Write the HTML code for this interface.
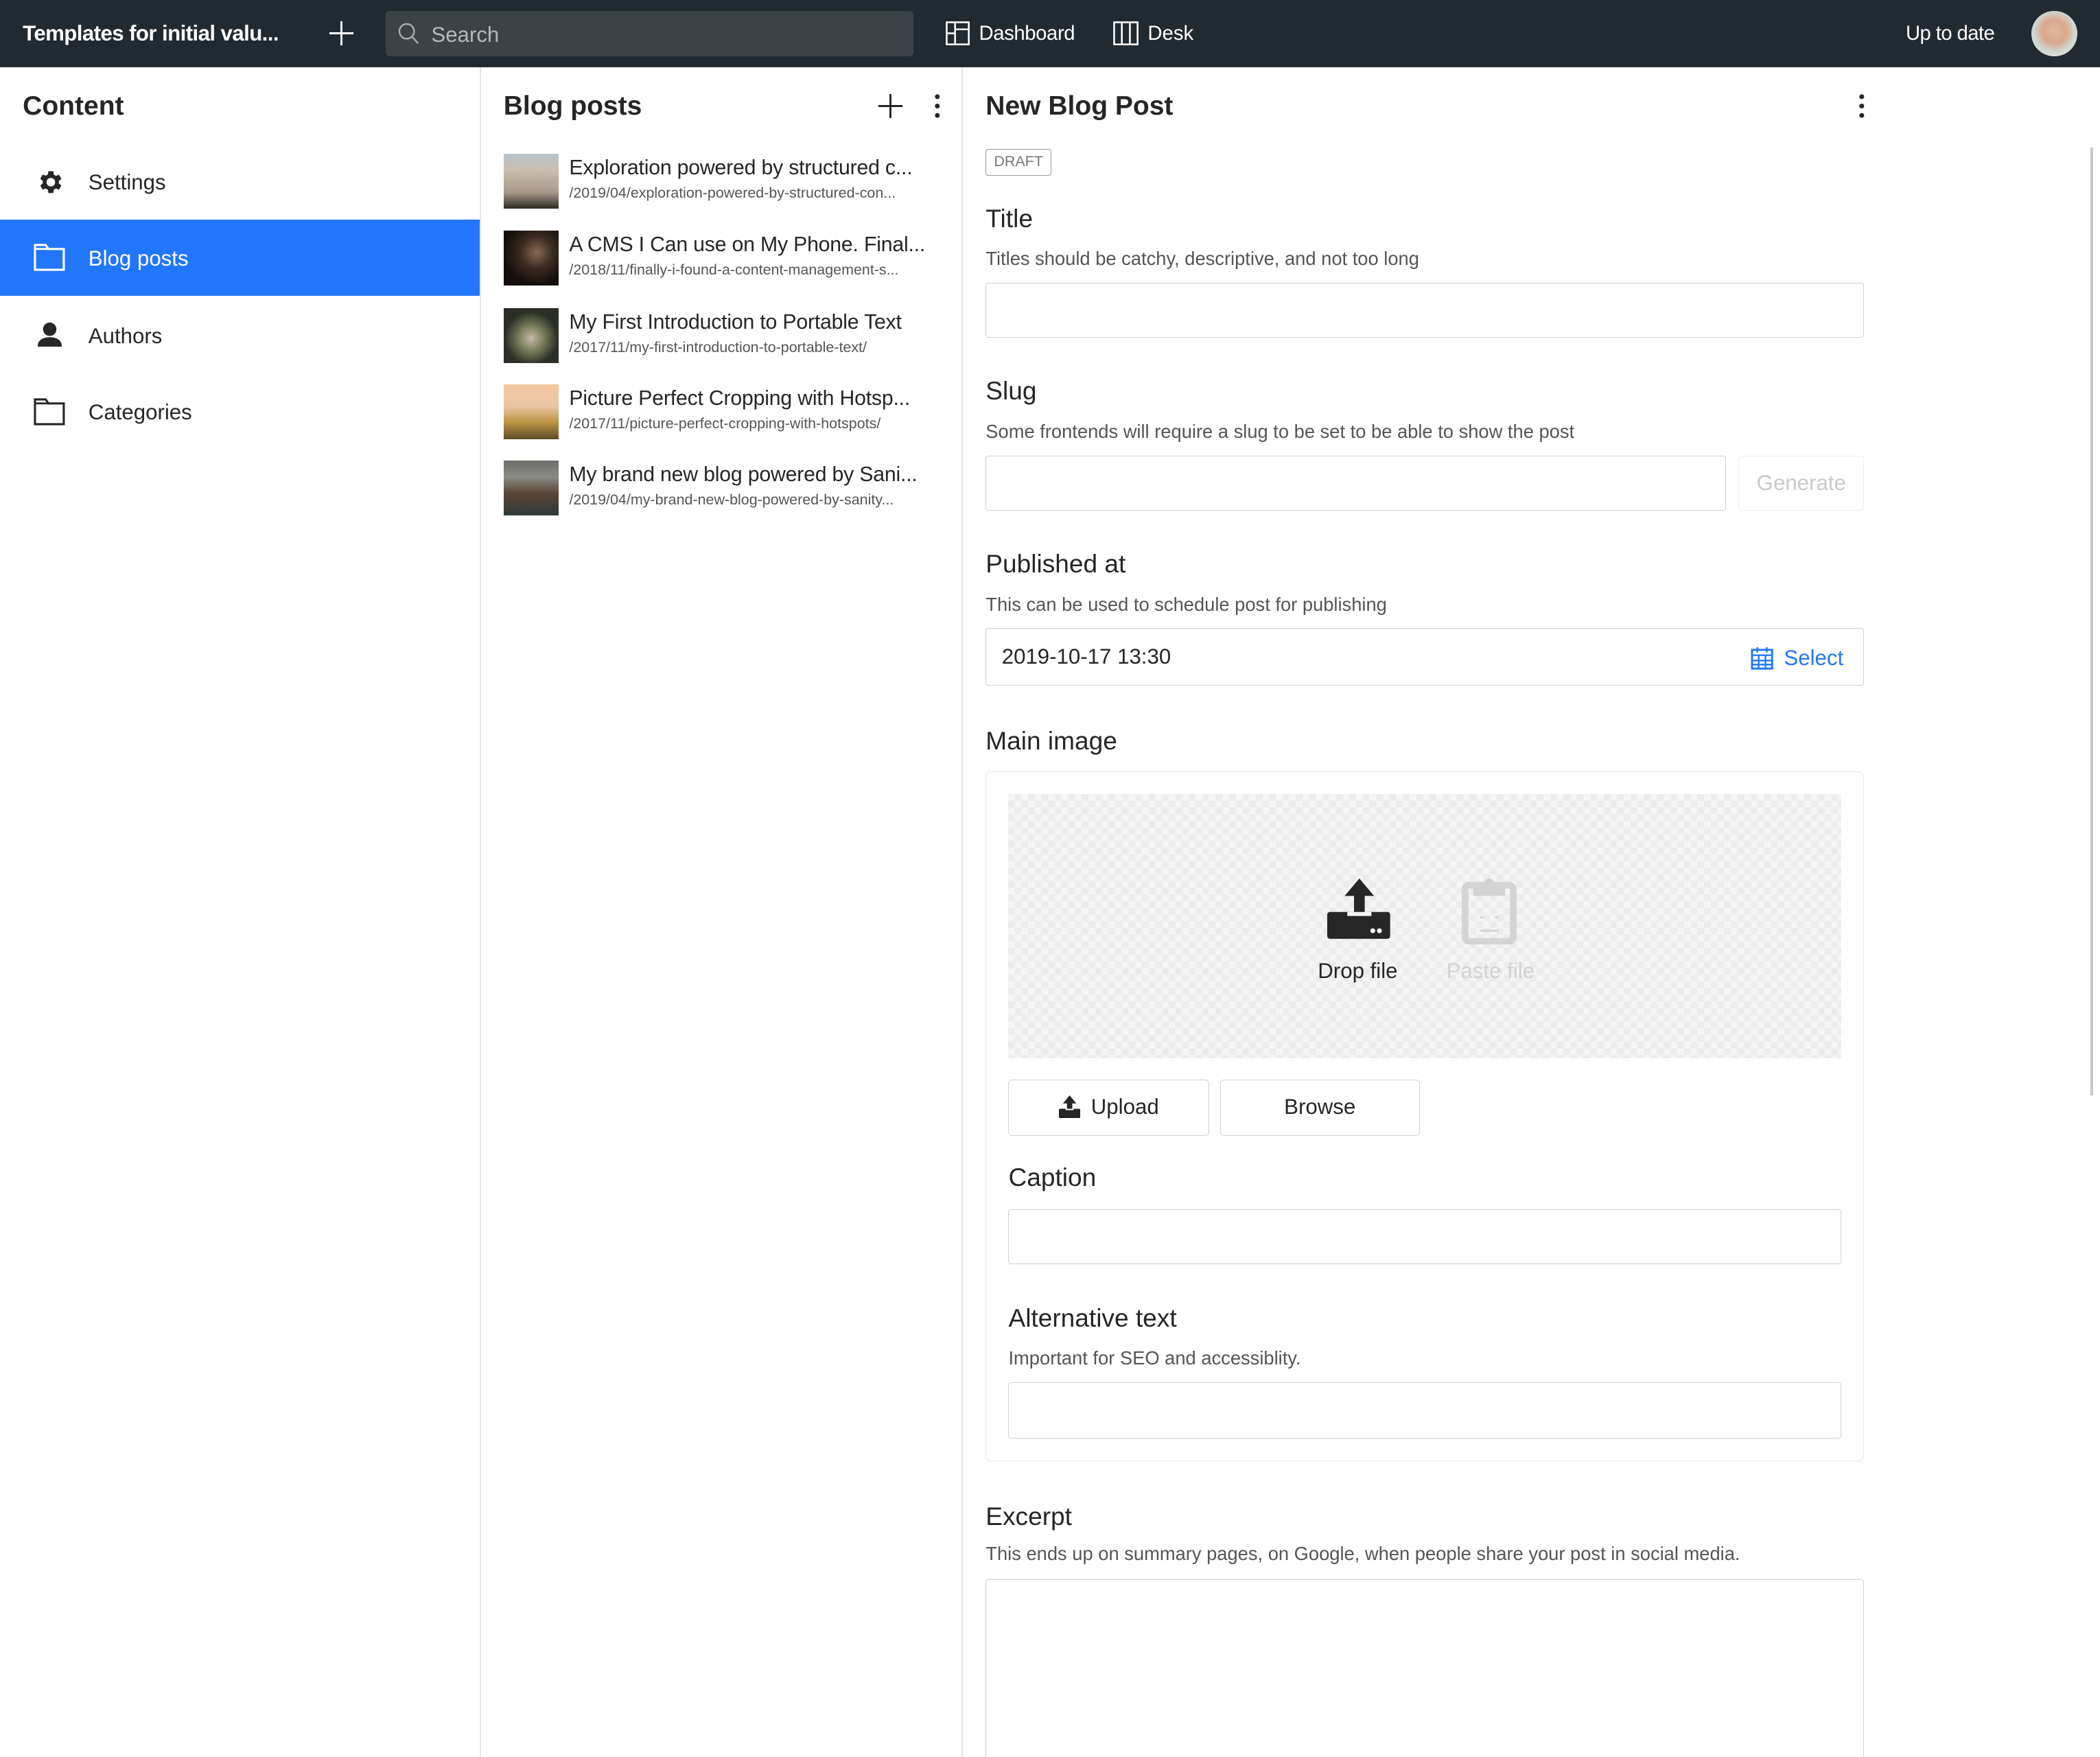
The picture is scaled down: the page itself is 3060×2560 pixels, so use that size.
<!DOCTYPE html>
<html><head><meta charset="utf-8"><style>
html,body{margin:0;padding:0;background:#fff;}
body{width:1568px;height:1312px;zoom:1.9515;overflow:hidden;position:relative;font-family:"Liberation Sans",sans-serif;color:#262626;}
.a{position:absolute;}
.top{left:0;top:0;width:1568px;height:50px;background:#222a31;color:#fff;}
.top .t{font-size:16px;}
.inp{border:1px solid #cfd1d4;border-radius:2px;background:#fff;box-sizing:border-box;}
.lbl{font-size:19px;color:#262626;}
.desc{font-size:14px;color:#555;}
.item .ti{font-size:15.5px;color:#262626;white-space:nowrap;letter-spacing:-0.1px;}
.item .u{font-size:11px;color:#555;white-space:nowrap;}
.th{width:41px;height:41px;}
.nav{font-size:16px;}
.btn{border:1px solid #cfd1d4;border-radius:3px;background:#fff;box-sizing:border-box;font-size:16px;text-align:center;line-height:40px;}
.chk{background-color:#f5f5f5;background-image:linear-gradient(45deg,#ececec 25%,transparent 25%,transparent 75%,#ececec 75%),linear-gradient(45deg,#ececec 25%,transparent 25%,transparent 75%,#ececec 75%);background-size:10px 10px;background-position:0 0,5px 5px;}
</style></head><body>
<div class="a top">
  <div class="a t" style="left:17px;top:16px;font-weight:bold;font-size:16px;letter-spacing:-0.3px;">Templates for initial valu...</div>
  <svg class="a" style="left:245px;top:15px" width="20" height="20"><path d="M10 1v18M1 10h18" stroke="#fff" stroke-width="1.5"/></svg>
  <div class="a" style="left:288px;top:8px;width:394px;height:34px;background:#3c4347;border-radius:3px;"></div>
  <svg class="a" style="left:297px;top:17px" width="16" height="17"><circle cx="6.5" cy="6.5" r="5.5" stroke="#aaa" stroke-width="1.3" fill="none"/><path d="M10.5 10.5l4.5 5" stroke="#aaa" stroke-width="1.3"/></svg>
  <div class="a t" style="left:322px;top:17px;color:#b5b8ba;">Search</div>
  <svg class="a" style="left:706px;top:16px" width="18" height="18"><rect x="0.75" y="0.75" width="16.5" height="16.5" fill="none" stroke="#fff" stroke-width="1.3"/><path d="M7 1v16M1 9h6M7 6h10" stroke="#fff" stroke-width="1.3"/></svg>
  <div class="a t" style="left:731px;top:17px;font-size:15px;letter-spacing:-0.2px;">Dashboard</div>
  <svg class="a" style="left:831px;top:16px" width="19" height="18"><rect x="0.75" y="0.75" width="17.5" height="16.5" fill="none" stroke="#fff" stroke-width="1.3"/><path d="M6.5 1v16M12.5 1v16" stroke="#fff" stroke-width="1.3"/></svg>
  <div class="a t" style="left:857px;top:17px;font-size:15px;">Desk</div>
  <div class="a t" style="left:1423px;top:17px;font-size:15px;letter-spacing:-0.3px;">Up to date</div>
  <div class="a" style="left:1517px;top:8px;width:34px;height:34px;border-radius:50%;background:radial-gradient(circle at 50% 45%,#e3b9a0 0,#d9a88c 35%,#cfd6cf 60%,#eaeeea 100%);"></div>
</div>
<div class="a" style="left:358px;top:50px;width:1px;height:1262px;background:#e4e5e7"></div>
<div class="a" style="left:17px;top:68px;font-size:20px;font-weight:bold;">Content</div>
<svg class="a" style="left:26px;top:125px" width="22" height="22" viewBox="0 0 24 24"><path fill="#262626" d="M19.4 13a7.6 7.6 0 0 0 0-2l2.1-1.6-2-3.5-2.5 1a7.4 7.4 0 0 0-1.7-1L14.9 3h-4l-.4 2.7a7.4 7.4 0 0 0-1.7 1l-2.5-1-2 3.5L6.4 11a7.6 7.6 0 0 0 0 2l-2.1 1.6 2 3.5 2.5-1a7.4 7.4 0 0 0 1.7 1l.4 2.7h4l.4-2.7a7.4 7.4 0 0 0 1.7-1l2.5 1 2-3.5zM12.9 15.5a3.5 3.5 0 1 1 0-7 3.5 3.5 0 0 1 0 7z"/></svg>
<div class="a nav" style="left:66px;top:127px;">Settings</div>
<div class="a" style="left:0;top:164px;width:358px;height:57px;background:#2276fc"></div>
<svg class="a" style="left:25px;top:181px" width="24" height="22"><path d="M1 2h8l2 3h11.5v15.5H1z" fill="none" stroke="#fff" stroke-width="1.6"/><path d="M1 5h10" stroke="#fff" stroke-width="1.4"/></svg>
<div class="a nav" style="left:66px;top:184px;color:#fff;">Blog posts</div>
<svg class="a" style="left:26px;top:240px" width="22" height="22"><circle cx="11" cy="6" r="5" fill="#262626"/><path d="M2 19c0-5 4-7 9-7s9 2 9 7z" fill="#262626"/></svg>
<div class="a nav" style="left:66px;top:242px;">Authors</div>
<svg class="a" style="left:25px;top:296px" width="24" height="22"><path d="M1 2h8l2 3h11.5v15.5H1z" fill="none" stroke="#262626" stroke-width="1.6"/><path d="M1 5h10" stroke="#262626" stroke-width="1.4"/></svg>
<div class="a nav" style="left:66px;top:299px;">Categories</div>
<div class="a" style="left:718px;top:50px;width:1px;height:1262px;background:#e4e5e7"></div>
<div class="a" style="left:376px;top:68px;font-size:20px;font-weight:bold;">Blog posts</div>
<svg class="a" style="left:655px;top:69px" width="20" height="20"><path d="M10 1v18M1 10h18" stroke="#262626" stroke-width="1.5"/></svg>
<svg class="a" style="left:696px;top:69px" width="8" height="20"><circle cx="4" cy="3" r="1.8" fill="#262626"/><circle cx="4" cy="10" r="1.8" fill="#262626"/><circle cx="4" cy="17" r="1.8" fill="#262626"/></svg>
<div class="a item" style="left:376px;top:115px">
 <div class="a th" style="background:linear-gradient(#b9c4cc 0,#c9beae 30%,#a89a88 70%,#2e2a26 100%)"></div>
 <div class="a ti" style="left:49px;top:2px">Exploration powered by structured c...</div>
 <div class="a u" style="left:49px;top:23px">/2019/04/exploration-powered-by-structured-con...</div>
</div>
<div class="a item" style="left:376px;top:172px">
 <div class="a th" style="background:radial-gradient(circle at 60% 40%,#8a6a55 0,#3a2a22 35%,#140f0c 70%)"></div>
 <div class="a ti" style="left:49px;top:2px">A CMS I Can use on My Phone. Final...</div>
 <div class="a u" style="left:49px;top:23px">/2018/11/finally-i-found-a-content-management-s...</div>
</div>
<div class="a item" style="left:376px;top:230px">
 <div class="a th" style="background:radial-gradient(circle at 50% 55%,#c9b9a8 0,#7a7f5a 30%,#2b2f28 65%)"></div>
 <div class="a ti" style="left:49px;top:2px">My First Introduction to Portable Text</div>
 <div class="a u" style="left:49px;top:23px">/2017/11/my-first-introduction-to-portable-text/</div>
</div>
<div class="a item" style="left:376px;top:287px">
 <div class="a th" style="background:linear-gradient(#f2c7a0 0,#e8c5a4 40%,#b8923f 70%,#5e4a2a 100%)"></div>
 <div class="a ti" style="left:49px;top:2px">Picture Perfect Cropping with Hotsp...</div>
 <div class="a u" style="left:49px;top:23px">/2017/11/picture-perfect-cropping-with-hotspots/</div>
</div>
<div class="a item" style="left:376px;top:344px">
 <div class="a th" style="background:linear-gradient(#6d6d6a 0,#8a8a85 30%,#5a4535 60%,#2e3a3a 100%)"></div>
 <div class="a ti" style="left:49px;top:2px">My brand new blog powered by Sani...</div>
 <div class="a u" style="left:49px;top:23px">/2019/04/my-brand-new-blog-powered-by-sanity...</div>
</div>
<div class="a" style="left:1561px;top:110px;width:2px;height:708px;background:#c8c8c8"></div>
<div class="a" style="left:736px;top:68px;font-size:20px;font-weight:bold;">New Blog Post</div>
<svg class="a" style="left:1386px;top:69px" width="8" height="20"><circle cx="4" cy="3" r="1.8" fill="#262626"/><circle cx="4" cy="10" r="1.8" fill="#262626"/><circle cx="4" cy="17" r="1.8" fill="#262626"/></svg>
<div class="a" style="left:736px;top:111px;width:49px;height:20px;border:1px solid #999;box-sizing:border-box;font-size:11px;color:#777;text-align:center;line-height:18px;border-radius:2px;">DRAFT</div>
<div class="a lbl" style="left:736px;top:152px">Title</div>
<div class="a desc" style="left:736px;top:185px">Titles should be catchy, descriptive, and not too long</div>
<div class="a inp" style="left:736px;top:211px;width:656px;height:41px"></div>
<div class="a lbl" style="left:736px;top:281px">Slug</div>
<div class="a desc" style="left:736px;top:314px">Some frontends will require a slug to be set to be able to show the post</div>
<div class="a inp" style="left:736px;top:340px;width:553px;height:41px"></div>
<div class="a" style="left:1298px;top:340px;width:94px;height:41px;border:1px solid #eee;border-radius:3px;box-sizing:border-box;font-size:16px;color:#c9c9c9;text-align:center;line-height:40px;">Generate</div>
<div class="a lbl" style="left:736px;top:410px">Published at</div>
<div class="a desc" style="left:736px;top:443px">This can be used to schedule post for publishing</div>
<div class="a inp" style="left:736px;top:469px;width:656px;height:43px"></div>
<div class="a" style="left:748px;top:481px;font-size:16px;">2019-10-17 13:30</div>
<svg class="a" style="left:1307px;top:482px" width="17" height="18"><rect x="1" y="3" width="15" height="14" fill="none" stroke="#2276fc" stroke-width="1.5"/><path d="M1 7h15M5 1v4M12 1v4M1 11h15M1 14h15M6 7v10M11 7v10" stroke="#2276fc" stroke-width="1.2"/></svg>
<div class="a" style="left:1332px;top:482px;font-size:16px;color:#2276fc;">Select</div>
<div class="a lbl" style="left:736px;top:542px">Main image</div>
<div class="a" style="left:736px;top:576px;width:656px;height:515px;border:1px solid #e8e8e8;border-radius:4px;box-sizing:border-box"></div>
<div class="a chk" style="left:753px;top:593px;width:622px;height:197px"></div>
<svg class="a" style="left:990px;top:656px" width="50" height="46"><path d="M25 0l11 13h-7v20h-8V13h-7z" fill="#262626"/><rect x="1" y="25" width="47" height="20" rx="2" fill="#262626"/><path d="M16 25v3h18v-3z" fill="#f5f5f5"/><circle cx="35" cy="39" r="1.8" fill="#fff"/><circle cx="40" cy="39" r="1.8" fill="#fff"/></svg>
<div class="a" style="left:984px;top:716px;font-size:16px;">Drop file</div>
<svg class="a" style="left:1091px;top:655px" width="44" height="50"><rect x="3" y="6" width="36" height="42" rx="3" fill="none" stroke="#d4d4d4" stroke-width="5"/><rect x="9" y="6" width="24" height="8" fill="#d4d4d4"/><circle cx="21" cy="5" r="4" fill="#d4d4d4"/><path d="M14 30h3M25 30h3M14 40h14" stroke="#d4d4d4" stroke-width="1.5"/></svg>
<div class="a" style="left:1080px;top:716px;font-size:16px;color:#d2d2d2;">Paste file</div>
<div class="a btn" style="left:753px;top:806px;width:150px;height:42px;"><svg style="vertical-align:-3px;margin-right:8px" width="16" height="17"><path d="M8 0l5 6h-3v7H6V6H3z" fill="#262626"/><rect x="0" y="10" width="16" height="7" rx="1" fill="#262626"/><path d="M5 10v1h6v-1z" fill="#fff"/></svg>Upload</div>
<div class="a btn" style="left:911px;top:806px;width:149px;height:42px;">Browse</div>
<div class="a lbl" style="left:753px;top:868px">Caption</div>
<div class="a inp" style="left:753px;top:903px;width:622px;height:41px"></div>
<div class="a lbl" style="left:753px;top:973px">Alternative text</div>
<div class="a desc" style="left:753px;top:1006px">Important for SEO and accessiblity.</div>
<div class="a inp" style="left:753px;top:1032px;width:622px;height:42px"></div>
<div class="a lbl" style="left:736px;top:1121px">Excerpt</div>
<div class="a desc" style="left:736px;top:1152px">This ends up on summary pages, on Google, when people share your post in social media.</div>
<div class="a" style="left:736px;top:1179px;width:656px;height:133px;border:1px solid #cfd1d4;border-bottom:none;box-sizing:border-box;border-radius:2px 2px 0 0"></div>
</body></html>
